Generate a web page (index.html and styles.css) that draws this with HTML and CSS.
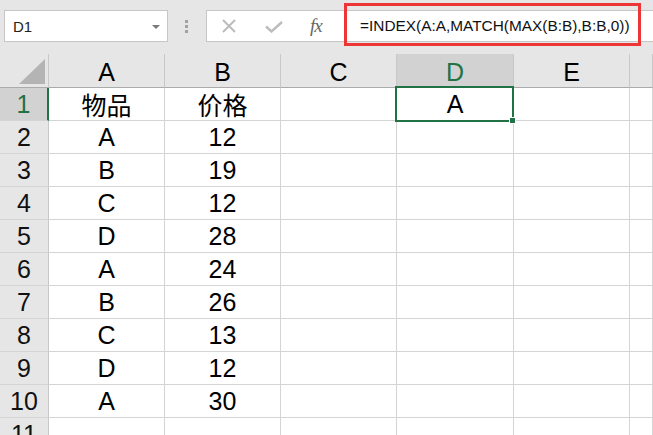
FILE: index.html
```html
<!DOCTYPE html>
<html lang="zh">
<head>
<meta charset="utf-8">
<title>Excel</title>
<link rel="stylesheet" href="styles.css">
</head>
<body>
<div class="app">
  <div class="toolbar">
    <div class="namebox"><span class="nb-text">D1</span><span class="caret"></span></div>
    <div class="grip"><i></i><i></i><i></i></div>
    <div class="fbar">
      <div class="fbtns">
        <svg class="ic-x" width="14" height="14" viewBox="0 0 14 14"><path d="M1 1L13 13M13 1L1 13" stroke="#bcbcbc" stroke-width="2" fill="none"/></svg>
        <svg class="ic-ok" width="18" height="12" viewBox="0 0 18 12"><path d="M1 5.5L6.5 10.5L17 1" stroke="#bcbcbc" stroke-width="2.4" fill="none"/></svg>
        <span class="fx">fx</span>
      </div>
      <div class="finput">=INDEX(A:A,MATCH(MAX(B:B),B:B,0))</div>
    </div>
    <div class="highlight"></div>
  </div>
  <div class="sheet">
    <div class="grid">
      <div class="hd corner"><span class="tri"></span></div>
      <div class="hd col">A</div>
      <div class="hd col">B</div>
      <div class="hd col">C</div>
      <div class="hd col sel">D</div>
      <div class="hd col">E</div>
      <div class="hd col"></div>

      <div class="rh sel">1</div><div class="c">物品</div><div class="c">价格</div><div class="c"></div><div class="c">A</div><div class="c"></div><div class="c"></div>
      <div class="rh">2</div><div class="c">A</div><div class="c">12</div><div class="c"></div><div class="c"></div><div class="c"></div><div class="c"></div>
      <div class="rh">3</div><div class="c">B</div><div class="c">19</div><div class="c"></div><div class="c"></div><div class="c"></div><div class="c"></div>
      <div class="rh">4</div><div class="c">C</div><div class="c">12</div><div class="c"></div><div class="c"></div><div class="c"></div><div class="c"></div>
      <div class="rh">5</div><div class="c">D</div><div class="c">28</div><div class="c"></div><div class="c"></div><div class="c"></div><div class="c"></div>
      <div class="rh">6</div><div class="c">A</div><div class="c">24</div><div class="c"></div><div class="c"></div><div class="c"></div><div class="c"></div>
      <div class="rh">7</div><div class="c">B</div><div class="c">26</div><div class="c"></div><div class="c"></div><div class="c"></div><div class="c"></div>
      <div class="rh">8</div><div class="c">C</div><div class="c">13</div><div class="c"></div><div class="c"></div><div class="c"></div><div class="c"></div>
      <div class="rh">9</div><div class="c">D</div><div class="c">12</div><div class="c"></div><div class="c"></div><div class="c"></div><div class="c"></div>
      <div class="rh">10</div><div class="c">A</div><div class="c">30</div><div class="c"></div><div class="c"></div><div class="c"></div><div class="c"></div>
      <div class="rh">11</div><div class="c"></div><div class="c"></div><div class="c"></div><div class="c"></div><div class="c"></div><div class="c"></div>
    </div>
    <div class="selection"><span class="handle"></span></div>
  </div>
</div>
</body>
</html>
```

FILE: styles.css
```css
* { box-sizing: border-box; }
html, body { margin: 0; padding: 0; }
body {
  width: 653px;
  height: 435px;
  overflow: hidden;
  background: #ffffff;
  font-family: "Liberation Sans", "Noto Sans CJK SC", sans-serif;
  color: #000;
}
.app { width: 653px; height: 435px; overflow: hidden; }

.toolbar {
  position: relative;
  height: 54px;
  background: #e6e6e6;
  display: flex;
  align-items: flex-start;
  padding: 10px 0 0 4px;
}
.namebox {
  flex: 0 0 164px;
  width: 164px;
  height: 32px;
  background: #fff;
  border: 1px solid #c6c6c6;
  display: flex;
  align-items: center;
  justify-content: space-between;
  padding: 0 7px 0 8px;
}
.nb-text { font-size: 15px; color: #222; }
.caret {
  width: 0; height: 0;
  border-left: 4px solid transparent;
  border-right: 4px solid transparent;
  border-top: 4px solid #7a7a7a;
  margin-top: 1px;
}
.grip {
  flex: 0 0 4px;
  margin-left: 17px;
  width: 4px;
  height: 32px;
  display: flex;
  flex-direction: column;
  justify-content: center;
  gap: 2px;
}
.grip i { display: block; width: 3px; height: 3px; background: #a2a2a2; }
.fbar {
  margin-left: 17px;
  flex: 1 1 auto;
  min-width: 0;
  overflow: hidden;
  height: 32px;
  background: #fff;
  border: 1px solid #c6c6c6;
  border-right: none;
  display: flex;
  align-items: center;
}
.fbtns {
  flex: 0 0 138px;
  display: flex;
  align-items: center;
  padding-left: 15px;
}
.ic-x { margin-right: 29px; }
.ic-ok { margin-right: 27px; margin-top: 2px; }
.fx {
  font-family: "Liberation Serif", serif;
  font-style: italic;
  font-size: 19px;
  color: #666;
  letter-spacing: -1px;
}
.finput {
  font-size: 15.4px;
  color: #111;
  padding-left: 15px;
  white-space: nowrap;
}
.highlight {
  position: absolute;
  left: 344px;
  top: 3px;
  width: 297px;
  height: 43px;
  border: 3px solid #ee3535;
}

.sheet { position: relative; }
.grid {
  display: grid;
  grid-template-columns: 49px 116px 116px 116px 117px 116px 1fr;
  grid-template-rows: 34px repeat(11, 33px);
}
.hd {
  background: #e6e6e6;
  border-right: 1px solid #c8c8c8;
  border-bottom: 1px solid #ababab;
  font-size: 25px;
  display: flex;
  align-items: center;
  justify-content: center;
  padding-top: 4px;
}
.hd.sel { background: #d2d2d2; color: #217346; }
.corner { position: relative; border-right-color: #c8c8c8; }
.tri {
  position: absolute;
  right: 3px;
  bottom: 3px;
  width: 0; height: 0;
  border-left: 26px solid transparent;
  border-bottom: 25px solid #b4b4b4;
}
.rh {
  background: #e6e6e6;
  border-right: 1px solid #c8c8c8;
  border-bottom: 1px solid #d4d4d4;
  font-size: 25px;
  display: flex;
  align-items: center;
  justify-content: center;
  color: #111;
}
.rh.sel {
  background: #d2d2d2;
  color: #217346;
  border-right: 2px solid #217346;
}
.c {
  border-right: 1px solid #d4d4d4;
  border-bottom: 1px solid #d4d4d4;
  font-size: 25px;
  display: flex;
  align-items: center;
  justify-content: center;
  white-space: nowrap;
}
.selection {
  position: absolute;
  left: 395px;
  top: 32px;
  width: 119px;
  height: 36px;
  border: 2px solid #217346;
}
.handle {
  position: absolute;
  right: -4px;
  bottom: -4px;
  width: 7px;
  height: 7px;
  background: #217346;
  border: 1px solid #fff;
}
```
